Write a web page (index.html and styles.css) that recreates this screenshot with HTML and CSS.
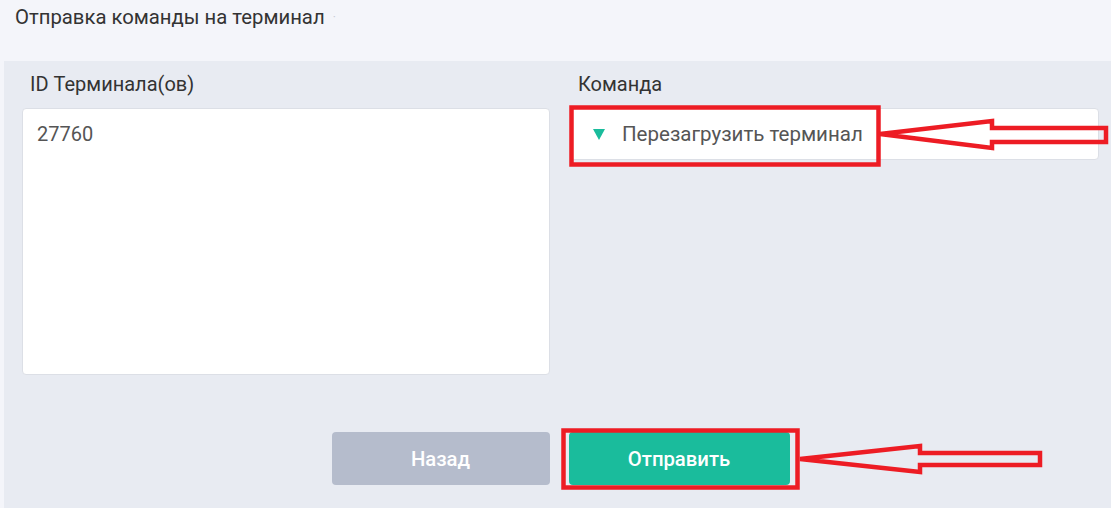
FILE: index.html
```
<!DOCTYPE html>
<html lang="ru">
<head>
  <meta charset="UTF-8" />
  <meta name="viewport" content="width=device-width, initial-scale=1.0" />
  <title>Отправка команды на терминал</title>
  <link rel="stylesheet" href="styles.css">
</head>
<body>
  <header class="page-head">
    <span class="page-title">Отправка команды на терминал</span>
    <span class="page-dot">·</span>
  </header>
  <main class="panel">
    <div class="fields">
      <div class="field">
        <label class="field-label">ID Терминала(ов)</label>
        <div class="textbox">27760</div>
      </div>
      <div class="field">
        <label class="field-label">Команда</label>
        <div class="select">
          <span class="select-caret"></span>
          <span class="select-value">Перезагрузить терминал</span>
        </div>
      </div>
    </div>
    <div class="actions">
      <button class="btn btn-back">Назад</button>
      <button class="btn btn-send">Отправить</button>
    </div>
  </main>

  <!-- annotation marks drawn over the form -->
  <svg class="marks" width="1111" height="508" viewBox="0 0 1111 508">
    <g fill="none" stroke="#ed1c24" stroke-width="4.5" stroke-linejoin="miter">
      <rect x="571.5" y="107.5" width="307" height="57" />
      <path d="M880 134 L992 121 L992 128 L1106 128 L1106 142 L992 142 L992 148 Z" />
      <rect x="563.5" y="430.5" width="234" height="57" />
      <path d="M800 459 L920 446 L920 453 L1040 453 L1040 465 L920 465 L920 472 Z" />
    </g>
  </svg>
</body>
</html>
```

FILE: styles.css
```
* { margin: 0; padding: 0; box-sizing: border-box; }
html, body {
  width: 100%; height: 100%;
  font-family: Roboto, "Noto Sans", sans-serif;
  background: #f4f5fa; color: #333;
  overflow: hidden;
}
body { position: relative; }
.page-head {
  height: 61px;
  padding: 5px 15px 0;
  display: flex;
  align-items: flex-start;
  gap: 8px;
}
.page-title { font-size: 20.3px; line-height: 24px; color: #333; }
.page-dot { font-size: 12px; line-height: 24px; color: #c8ccd6; }
.panel {
  margin-left: 4px;
  height: 447px;
  background: #e8ebf2;
  padding: 11px 12px 0 18px;
}
.fields {
  display: grid;
  grid-template-columns: 528px 529px;
  gap: 20px;
}
.field-label {
  display: block;
  font-size: 20px;
  line-height: 24px;
  color: #333;
  padding-left: 8px;
  margin-bottom: 12px;
}
.textbox {
  height: 267px;
  background: #fff;
  border: 1px solid #dcdfe6;
  border-radius: 4px;
  padding: 12px 14px;
  font-size: 20px;
  line-height: 26px;
  color: #555;
}
.select {
  height: 52px;
  background: #fff;
  border: 1px solid #dcdfe6;
  border-radius: 4px;
  display: flex;
  align-items: center;
  padding-left: 22px;
  gap: 17px;
}
.select-caret {
  width: 0; height: 0;
  border-left: 6.5px solid transparent;
  border-right: 6.5px solid transparent;
  border-top: 11px solid #1abc9c;
}
.select-value { font-size: 20.5px; color: #555; }
.actions {
  display: flex;
  justify-content: center;
  gap: 19px;
  margin-top: 57px;
}
.btn {
  height: 53px;
  border: none;
  border-radius: 4px;
  color: #fff;
  font-family: inherit;
  font-size: 20.3px;
  font-weight: 500;
  cursor: pointer;
}
.btn-back { width: 218px; background: #b5bccc; }
.btn-send { width: 221px; background: #1abc9c; }
.marks {
  position: absolute;
  top: 0; left: 0;
  pointer-events: none;
}
```
